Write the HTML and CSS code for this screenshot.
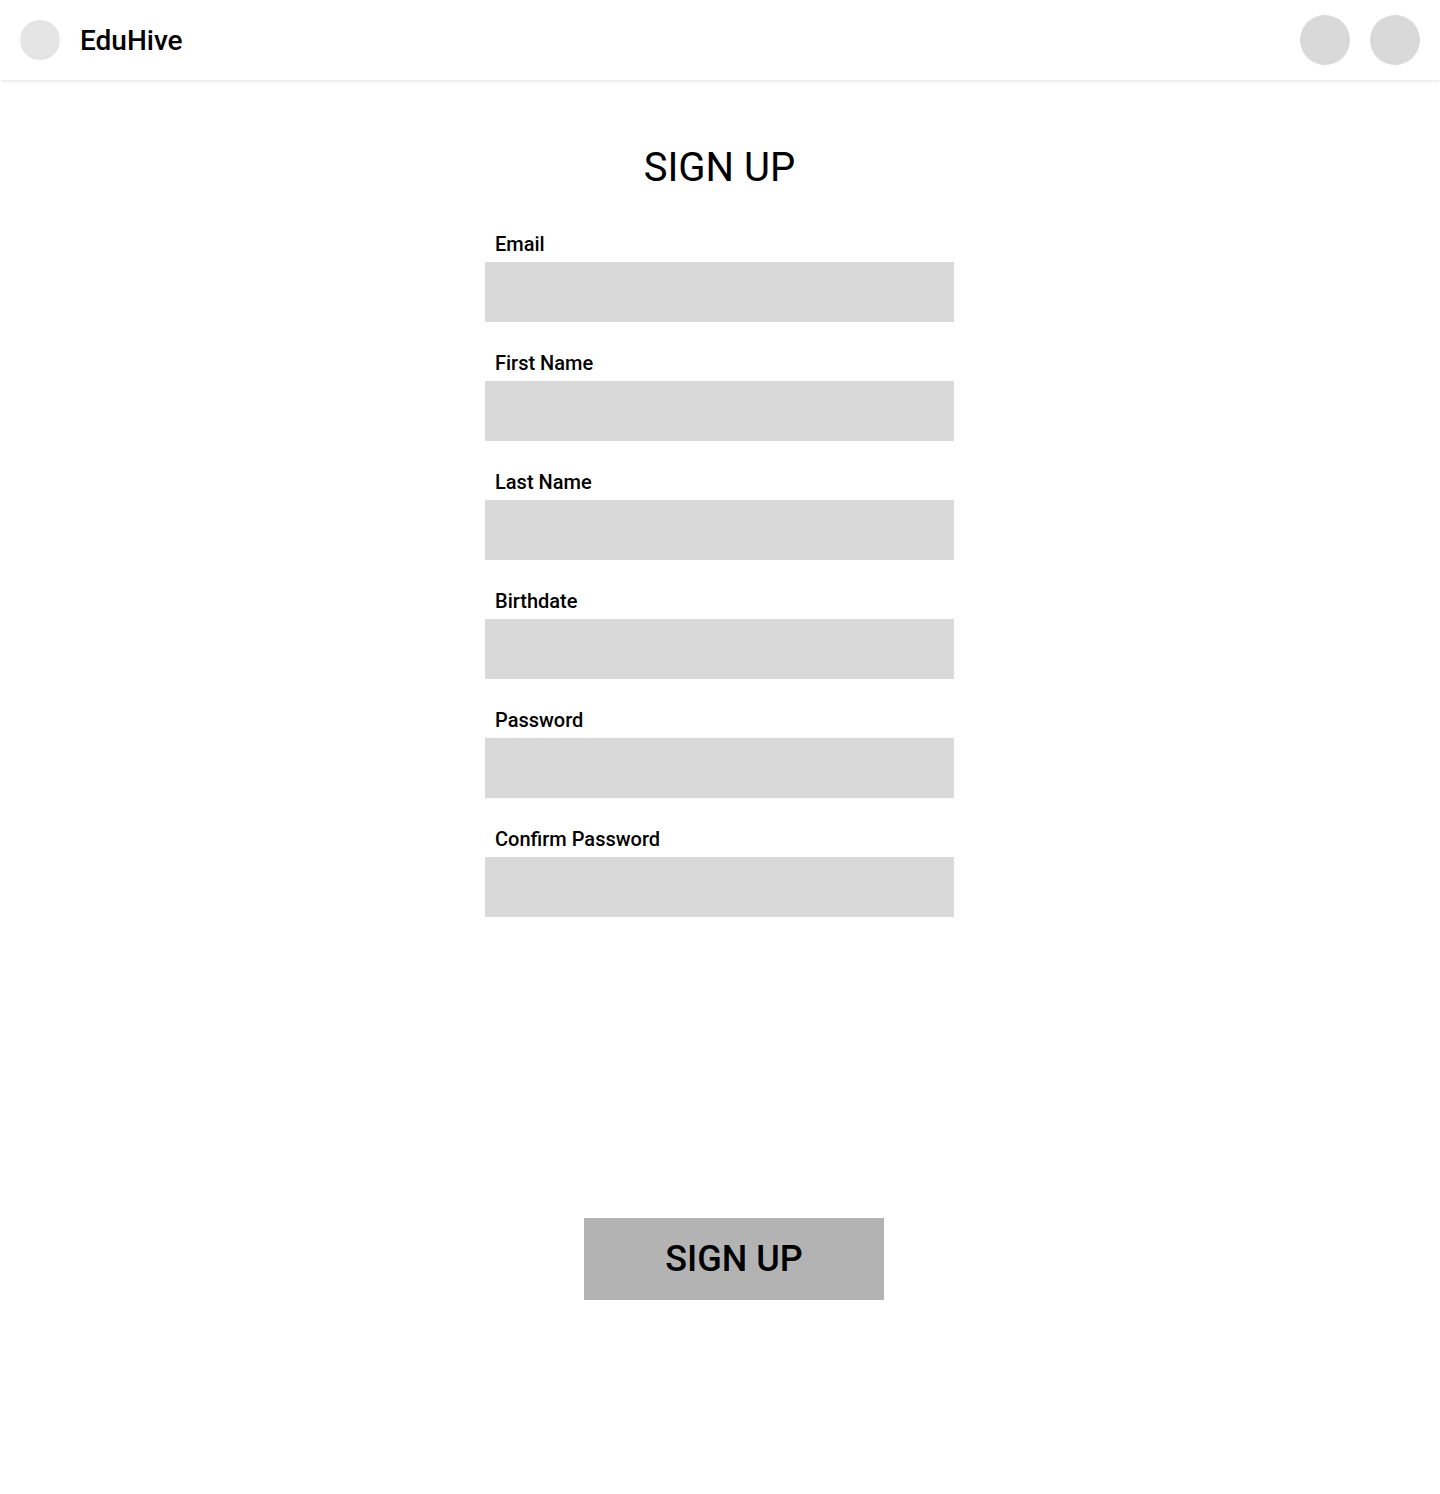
FILE: index.html
```html
<!DOCTYPE html>
<html lang="en">
<head>
<meta charset="utf-8">
<title>EduHive - Sign Up</title>
<link rel="stylesheet" href="styles.css">
</head>
<body>
<header class="topbar">
  <div class="brand">
    <div class="logo"></div>
    <span class="brand-name">EduHive</span>
  </div>
  <div class="actions">
    <div class="avatar"></div>
    <div class="avatar"></div>
  </div>
</header>
<main class="page">
  <form class="signup">
    <h1 class="title">SIGN UP</h1>
    <div class="fields">
      <label class="field"><span class="label">Email</span><input class="input" type="text"></label>
      <label class="field"><span class="label">First Name</span><input class="input" type="text"></label>
      <label class="field"><span class="label">Last Name</span><input class="input" type="text"></label>
      <label class="field"><span class="label">Birthdate</span><input class="input" type="text"></label>
      <label class="field"><span class="label">Password</span><input class="input" type="password"></label>
      <label class="field"><span class="label">Confirm Password</span><input class="input" type="password"></label>
    </div>
    <button class="submit" type="button">SIGN UP</button>
  </form>
</main>
</body>
</html>
```
FILE: styles.css
```css
* { box-sizing: border-box; }
html, body {
  margin: 0;
  padding: 0;
  background: #ffffff;
  font-family: Roboto, "Liberation Sans", sans-serif;
  color: #000;
}
body { min-height: 1494px; }

.topbar {
  height: 80px;
  display: flex;
  align-items: center;
  justify-content: space-between;
  padding: 0 20px;
  background: #fff;
  box-shadow: 0 1px 3px rgba(0, 0, 0, 0.12);
  position: relative;
  z-index: 1;
}
.brand {
  display: flex;
  align-items: center;
  gap: 20px;
}
.logo {
  width: 40px;
  height: 40px;
  border-radius: 50%;
  background: #e5e5e5;
}
.brand-name {
  font-size: 28px;
  font-weight: 500;
  line-height: 32px;
  padding-top: 2px;
}
.actions {
  display: flex;
  gap: 20px;
}
.avatar {
  width: 50px;
  height: 50px;
  border-radius: 50%;
  background: #d9d9d9;
}

.page {
  padding: 64px 0 0 485px;
}
.signup {
  width: 469px;
  display: flex;
  flex-direction: column;
}
.title {
  margin: 0 0 40px;
  text-align: center;
  font-size: 40px;
  font-weight: 400;
  line-height: 48px;
}
.fields {
  display: flex;
  flex-direction: column;
  gap: 29px;
}
.field {
  display: flex;
  flex-direction: column;
  gap: 6px;
}
.label {
  padding-left: 10px;
  font-size: 20px;
  line-height: 24px;
  font-weight: 500;
}
.input {
  height: 60px;
  width: 100%;
  border: 0;
  margin: 0;
  background: #d9d9d9;
  outline: none;
}
.submit {
  margin: 301px 0 0 99px;
  width: 300px;
  height: 82px;
  border: 0;
  background: #b3b3b3;
  font-family: Roboto, "Liberation Sans", sans-serif;
  font-size: 36px;
  font-weight: 500;
  color: #000;
  padding: 0;
  cursor: pointer;
}
```
